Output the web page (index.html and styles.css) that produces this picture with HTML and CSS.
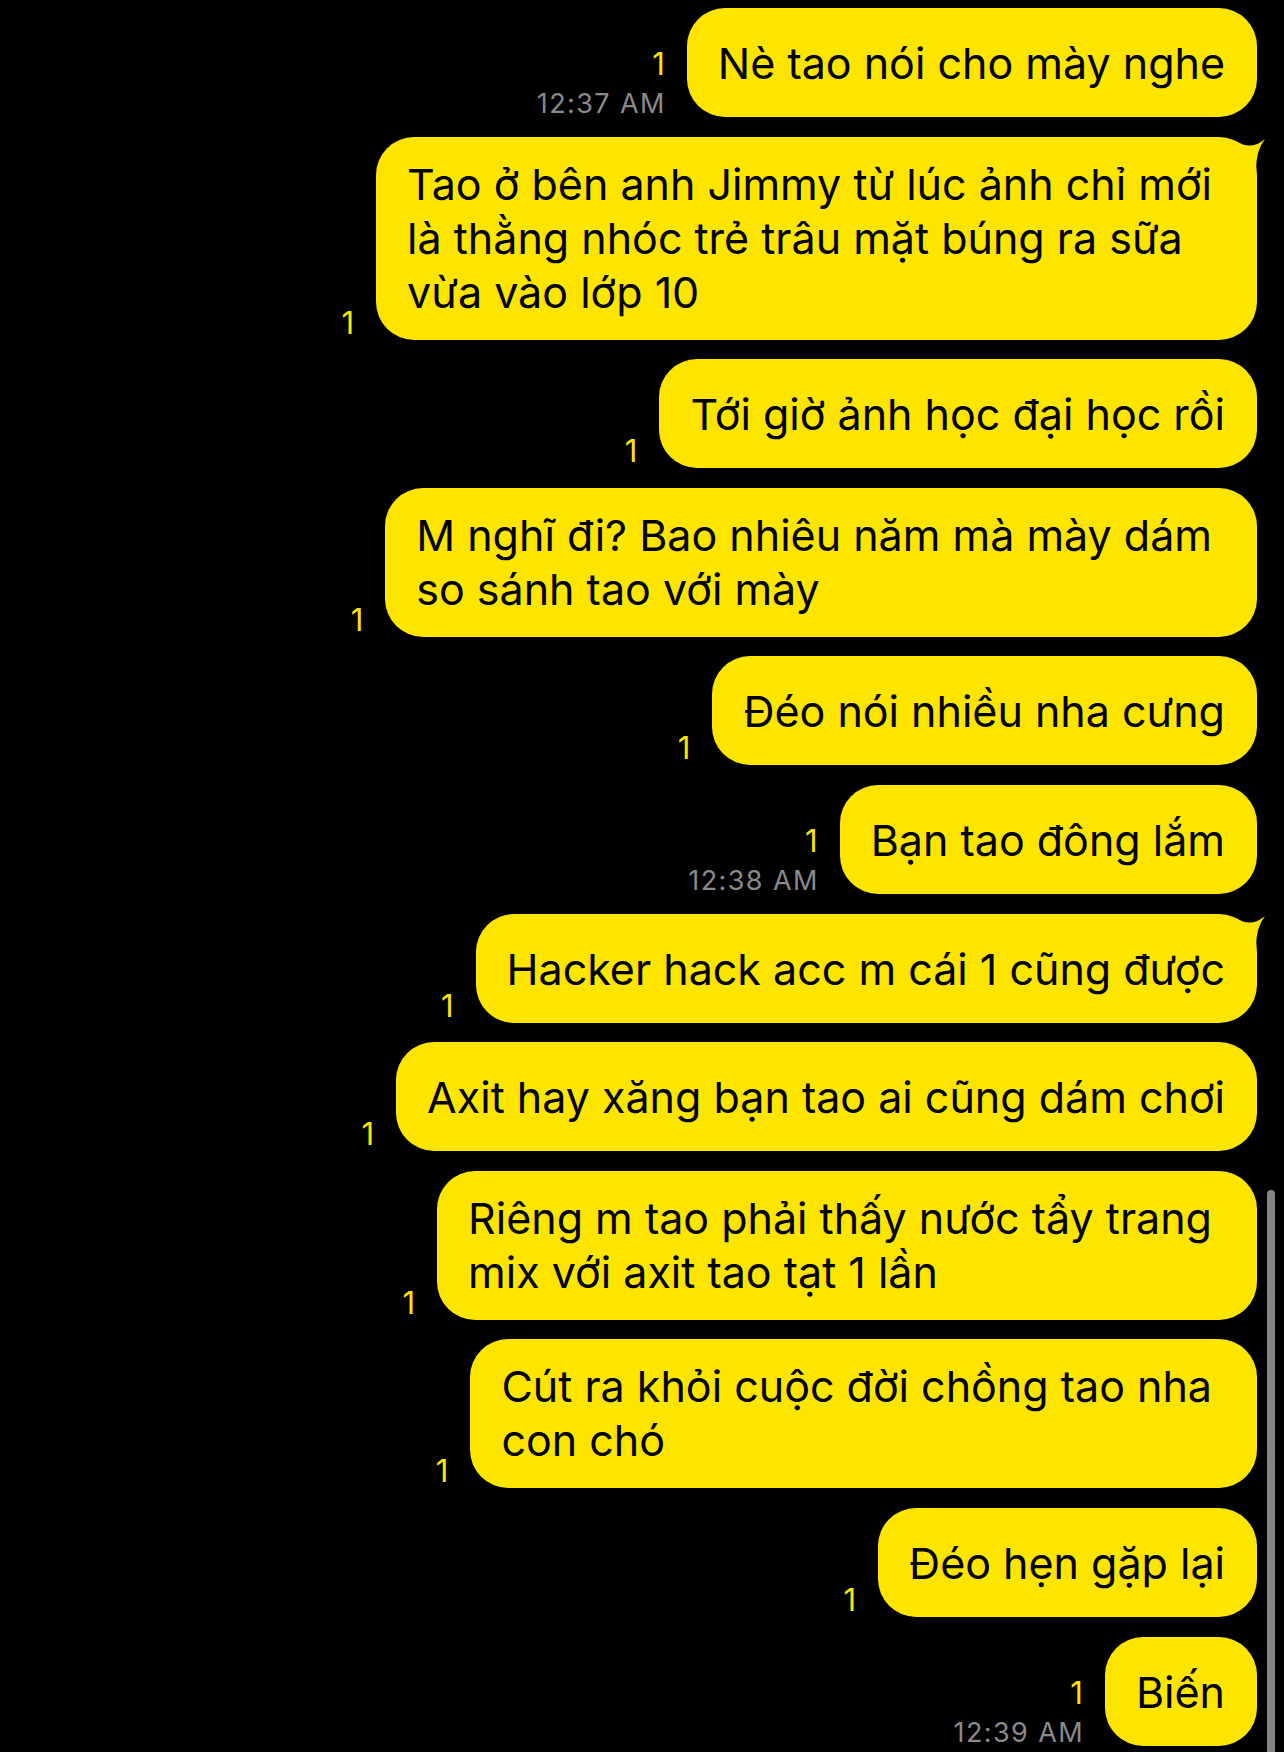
FILE: index.html
```html
<!DOCTYPE html>
<html lang="vi">
<head>
    <meta charset="UTF-8">
    <meta name="viewport" content="width=device-width, initial-scale=1.0">
    <title>Chat</title>
    <link rel="stylesheet" href="styles.css">
</head>
<body>
    <div class="chat">
        <div class="row">
            <div class="meta"><span class="unread">1</span><span class="time">12:37 AM</span></div>
            <div class="bubble">Nè tao nói cho mày nghe</div>
        </div>
        <div class="row">
            <div class="meta"><span class="unread">1</span></div>
            <div class="bubble multi">
                <svg class="tail" viewBox="0 0 32 36"><path d="M2 4 Q17 14 31 2 Q22 13 22 34 L2 34 Z"/></svg>
                Tao ở bên anh Jimmy từ lúc ảnh chỉ mới<br>là thằng nhóc trẻ trâu mặt búng ra sữa<br>vừa vào lớp 10
            </div>
        </div>
        <div class="row">
            <div class="meta"><span class="unread">1</span></div>
            <div class="bubble">Tới giờ ảnh học đại học rồi</div>
        </div>
        <div class="row">
            <div class="meta"><span class="unread">1</span></div>
            <div class="bubble multi">M nghĩ đi? Bao nhiêu năm mà mày dám<br>so sánh tao với mày</div>
        </div>
        <div class="row">
            <div class="meta"><span class="unread">1</span></div>
            <div class="bubble">Đéo nói nhiều nha cưng</div>
        </div>
        <div class="row">
            <div class="meta"><span class="unread">1</span><span class="time">12:38 AM</span></div>
            <div class="bubble">Bạn tao đông lắm</div>
        </div>
        <div class="row">
            <div class="meta"><span class="unread">1</span></div>
            <div class="bubble">
                <svg class="tail" viewBox="0 0 32 36"><path d="M2 4 Q17 14 31 2 Q22 13 22 34 L2 34 Z"/></svg>
                Hacker hack acc m cái 1 cũng được
            </div>
        </div>
        <div class="row">
            <div class="meta"><span class="unread">1</span></div>
            <div class="bubble">Axit hay xăng bạn tao ai cũng dám chơi</div>
        </div>
        <div class="row">
            <div class="meta"><span class="unread">1</span></div>
            <div class="bubble multi">Riêng m tao phải thấy nước tẩy trang<br>mix với axit tao tạt 1 lần</div>
        </div>
        <div class="row">
            <div class="meta"><span class="unread">1</span></div>
            <div class="bubble multi">Cút ra khỏi cuộc đời chồng tao nha<br>con chó</div>
        </div>
        <div class="row">
            <div class="meta"><span class="unread">1</span></div>
            <div class="bubble">Đéo hẹn gặp lại</div>
        </div>
        <div class="row">
            <div class="meta"><span class="unread">1</span><span class="time">12:39 AM</span></div>
            <div class="bubble">Biến</div>
        </div>
    </div>
    <div class="scroll-thumb"></div>
</body>
</html>
```

FILE: styles.css
```css
body {
    margin: 0;
    background-color: #000;
    font-family: Inter, "Noto Sans", sans-serif;
    overflow: hidden;
}
.chat {
    display: flex;
    flex-direction: column;
    gap: 19.6px;
    padding: 8px 27px 0 0;
}
.row {
    display: flex;
    justify-content: flex-end;
    align-items: flex-end;
    gap: 22px;
}
.meta {
    display: flex;
    flex-direction: column;
    align-items: flex-end;
}
.unread {
    color: #fee500;
    font-size: 31px;
    line-height: 31px;
    margin-bottom: 2px;
}
.time {
    color: #8a8a8a;
    font-size: 27px;
    line-height: 27px;
    letter-spacing: 1.4px;
    margin-top: 9px;
    margin-right: -1px;
}
.bubble {
    position: relative;
    background-color: #fee500;
    color: #000;
    font-size: 43px;
    line-height: 54px;
    padding: 28px 32px 27px 31px;
    border-radius: 38px;
    white-space: nowrap;
}
.bubble.multi {
    padding: 20px 45px 21px 31px;
}
.tail {
    position: absolute;
    top: 0;
    right: -9px;
    width: 32px;
    height: 36px;
    fill: #fee500;
}
.scroll-thumb {
    position: fixed;
    left: 1267px;
    top: 1190px;
    width: 8px;
    height: 580px;
    border-radius: 4px;
    background-color: #858585;
}
```
